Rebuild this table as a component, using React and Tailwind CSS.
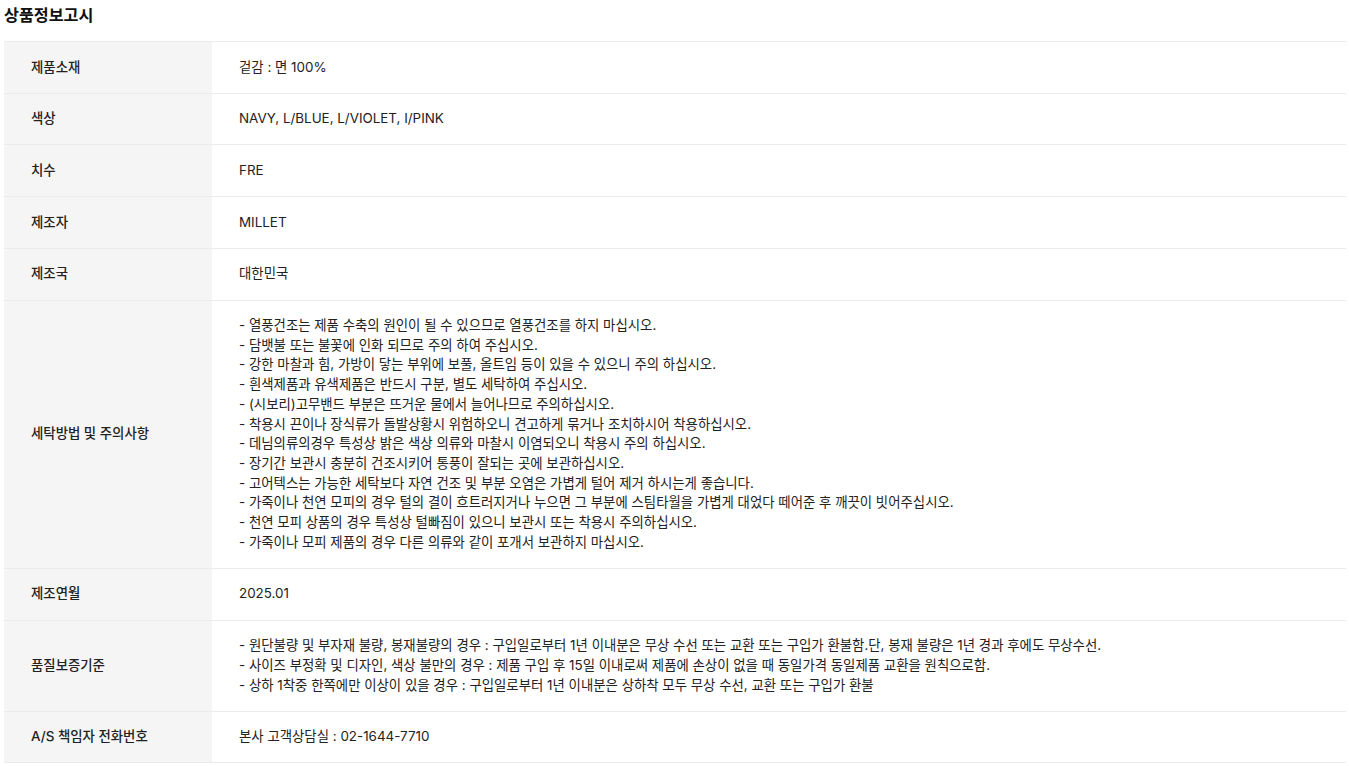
import React from "react";

const rows = [
  { label: "제품소재", value: ["겉감 : 면 100%"] },
  { label: "색상", value: ["NAVY, L/BLUE, L/VIOLET, I/PINK"] },
  { label: "치수", value: ["FRE"] },
  { label: "제조자", value: ["MILLET"] },
  { label: "제조국", value: ["대한민국"] },
  {
    label: "세탁방법 및 주의사항",
    value: [
      "- 열풍건조는 제품 수축의 원인이 될 수 있으므로 열풍건조를 하지 마십시오.",
      "- 담뱃불 또는 불꽃에 인화 되므로 주의 하여 주십시오.",
      "- 강한 마찰과 힘, 가방이 닿는 부위에 보풀, 올트임 등이 있을 수 있으니 주의 하십시오.",
      "- 흰색제품과 유색제품은 반드시 구분, 별도 세탁하여 주십시오.",
      "- (시보리)고무밴드 부분은 뜨거운 물에서 늘어나므로 주의하십시오.",
      "- 착용시 끈이나 장식류가 돌발상황시 위험하오니 견고하게 묶거나 조치하시어 착용하십시오.",
      "- 데님의류의경우 특성상 밝은 색상 의류와 마찰시 이염되오니 착용시 주의 하십시오.",
      "- 장기간 보관시 충분히 건조시키어 통풍이 잘되는 곳에 보관하십시오.",
      "- 고어텍스는 가능한 세탁보다 자연 건조 및 부분 오염은 가볍게 털어 제거 하시는게 좋습니다.",
      "- 가죽이나 천연 모피의 경우 털의 결이 흐트러지거나 누으면 그 부분에 스팀타월을 가볍게 대었다 떼어준 후 깨끗이 빗어주십시오.",
      "- 천연 모피 상품의 경우 특성상 털빠짐이 있으니 보관시 또는 착용시 주의하십시오.",
      "- 가죽이나 모피 제품의 경우 다른 의류와 같이 포개서 보관하지 마십시오.",
    ],
  },
  { label: "제조연월", value: ["2025.01"] },
  {
    label: "품질보증기준",
    value: [
      "- 원단불량 및 부자재 불량, 봉재불량의 경우 : 구입일로부터 1년 이내분은 무상 수선 또는 교환 또는 구입가 환불함.단, 봉재 불량은 1년 경과 후에도 무상수선.",
      "- 사이즈 부정확 및 디자인, 색상 불만의 경우 : 제품 구입 후 15일 이내로써 제품에 손상이 없을 때 동일가격 동일제품 교환을 원칙으로함.",
      "- 상하 1착중 한쪽에만 이상이 있을 경우 : 구입일로부터 1년 이내분은 상하착 모두 무상 수선, 교환 또는 구입가 환불",
    ],
  },
  { label: "A/S 책임자 전화번호", value: ["본사 고객상담실 : 02-1644-7710"] },
];

export default function App() {
  return (
    <div
      className="bg-white text-[#222] pl-[4px] pr-[3px]"
      style={{ fontFamily: "Inter, 'Noto Sans CJK KR', sans-serif" }}
    >
      <h2 className="text-[16.2px] font-bold leading-[20px] pt-[5px] pb-[16px] text-[#111]">
        상품정보고시
      </h2>
      <div className="border-t border-[#ebebeb]">
        {rows.map((r, i) => (
          <div key={i} className="flex border-b border-[#ebebeb] text-[13.4px] leading-[19.7px]">
            <div className="w-[208px] shrink-0 bg-[#f5f5f5] pl-[27px] flex items-center font-medium">
              {r.label}
            </div>
            <div className="flex-1 pl-[27px] py-[15.5px]">
              {r.value.map((v, j) => (
                <p key={j}>{v}</p>
              ))}
            </div>
          </div>
        ))}
      </div>
    </div>
  );
}
